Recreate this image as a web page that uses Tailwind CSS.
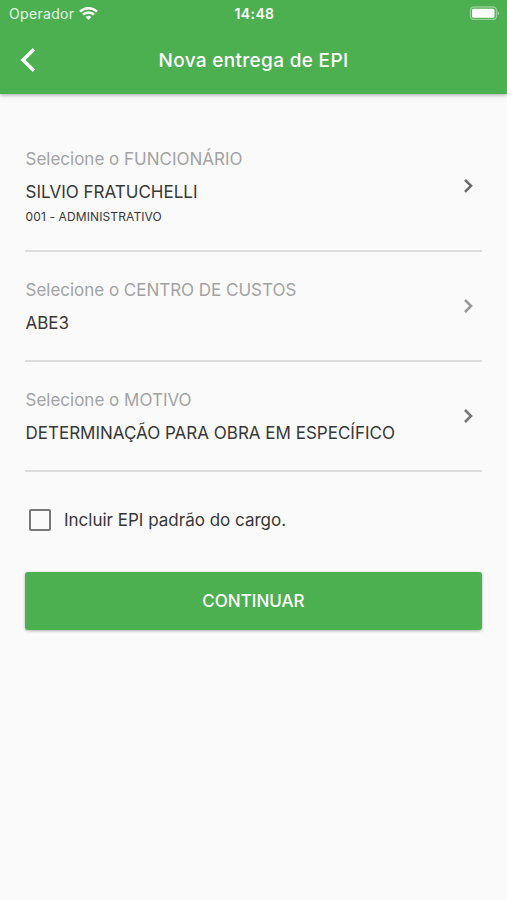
<!DOCTYPE html>
<html lang="pt-BR">
  <head>
    <meta charset="UTF-8" />
    <meta name="viewport" content="width=device-width, initial-scale=1.0" />
    <title>Nova entrega de EPI</title>
    <script src="https://cdn.jsdelivr.net/npm/@tailwindcss/browser@4"></script>
  </head>
  <body class="h-screen overflow-hidden bg-[#fafafa] font-['Inter',sans-serif] text-[#373737]">
    <header class="h-[94px] bg-[#4caf50] text-white shadow-[0_1px_4px_rgba(0,0,0,0.35)]">
      <!-- status bar -->
      <div class="grid h-7 grid-cols-3 items-center pl-[9px] pr-[7px] text-[14px]">
        <div class="flex items-center gap-[5px]">
          <span class="-mt-0.5 tracking-[0.32px] text-white/85">Operador</span>
          <svg class="-mt-0.5 h-[14px] w-[19px]" viewBox="0 0 19 14" fill="none" stroke="#fff" stroke-width="2.5">
            <path d="M1 5.6a12.2 12.2 0 0 1 17 0" />
            <path d="M4 8.7a7.9 7.9 0 0 1 11 0" />
            <path d="M9.5 14l-2.9-2.9a4.2 4.2 0 0 1 5.8 0z" fill="#fff" stroke="none" />
          </svg>
        </div>
        <span class="-mt-0.5 text-center font-semibold tracking-[0.4px]">14:48</span>
        <svg class="-mt-0.5 h-[14px] w-[31px] justify-self-end" viewBox="0 0 31 14">
          <rect x="1.5" y="1" width="26" height="12.5" rx="3.5" fill="none" stroke="#fff" stroke-opacity="0.4" stroke-width="1.4" />
          <rect x="3" y="2.8" width="22.5" height="9" rx="1.5" fill="#fff" />
          <path d="M28.8 5.5v4a2.2 2.2 0 0 0 0-4z" fill="#fff" fill-opacity="0.5" />
        </svg>
      </div>
      <div class="grid h-16 grid-cols-[60px_1fr_60px] items-center">
        <svg class="ml-5 h-6 w-4" viewBox="0 0 16 24" fill="none" stroke="#fff" stroke-width="3.4">
          <path d="M14 1.2L3 12l11 10.8" />
        </svg>
        <h1 class="pt-0.5 text-center text-[19px] font-medium tracking-[0.32px]">Nova entrega de EPI</h1>
      </div>
    </header>

    <main class="flex flex-col px-[25px] pt-[26px]">
      <div class="flex h-[132px] items-center justify-between border-b-2 border-[#dedede]">
        <div class="flex flex-col pt-[3px] pl-[0.5px]">
          <span class="text-[17px] leading-6 text-[#a3a3a3]">Selecione o FUNCIONÁRIO</span>
          <span class="mt-[9px] text-[17px] leading-6">SILVIO FRATUCHELLI</span>
          <span class="mt-1 text-[12px] leading-[18px] tracking-[0.12px]">001 - ADMINISTRATIVO</span>
        </div>
        <svg class="mt-[2px] mr-2 h-4 w-[11px]" viewBox="0 0 11 16" fill="none" stroke="#6b6b6b" stroke-width="2.6">
          <path d="M2 1.8l6 6-6 6" />
        </svg>
      </div>
      <div class="flex h-[110px] items-center justify-between border-b-2 border-[#dedede]">
        <div class="flex flex-col pl-[0.5px]">
          <span class="text-[17px] leading-6 tracking-[-0.02px] text-[#a3a3a3]">Selecione o CENTRO DE CUSTOS</span>
          <span class="mt-[9px] text-[17px] leading-6">ABE3</span>
        </div>
        <svg class="mr-2 h-4 w-[11px]" viewBox="0 0 11 16" fill="none" stroke="#999" stroke-width="2.6">
          <path d="M2 2l6 6-6 6" />
        </svg>
      </div>
      <div class="flex h-[110px] items-center justify-between border-b-2 border-[#dedede]">
        <div class="flex flex-col pl-[0.5px]">
          <span class="text-[17px] leading-6 text-[#a3a3a3]">Selecione o MOTIVO</span>
          <span class="mt-[9px] text-[17px] leading-6">DETERMINAÇÃO PARA OBRA EM ESPECÍFICO</span>
        </div>
        <svg class="mr-2 h-4 w-[11px]" viewBox="0 0 11 16" fill="none" stroke="#777" stroke-width="2.6">
          <path d="M2 2l6 6-6 6" />
        </svg>
      </div>

      <label class="mt-9 flex h-6 items-center gap-[13px] pl-1">
        <span class="h-[22px] w-[22px] rounded-[2px] border-2 border-[#777]"></span>
        <span class="text-[17px] leading-6">Incluir EPI padrão do cargo.</span>
      </label>

      <button class="mt-10 h-[58px] rounded-[3px] bg-[#4caf50] pt-px text-[17px] font-medium text-white shadow-[0_1px_3px_rgba(0,0,0,0.3)]">CONTINUAR</button>
    </main>
  </body>
</html>
